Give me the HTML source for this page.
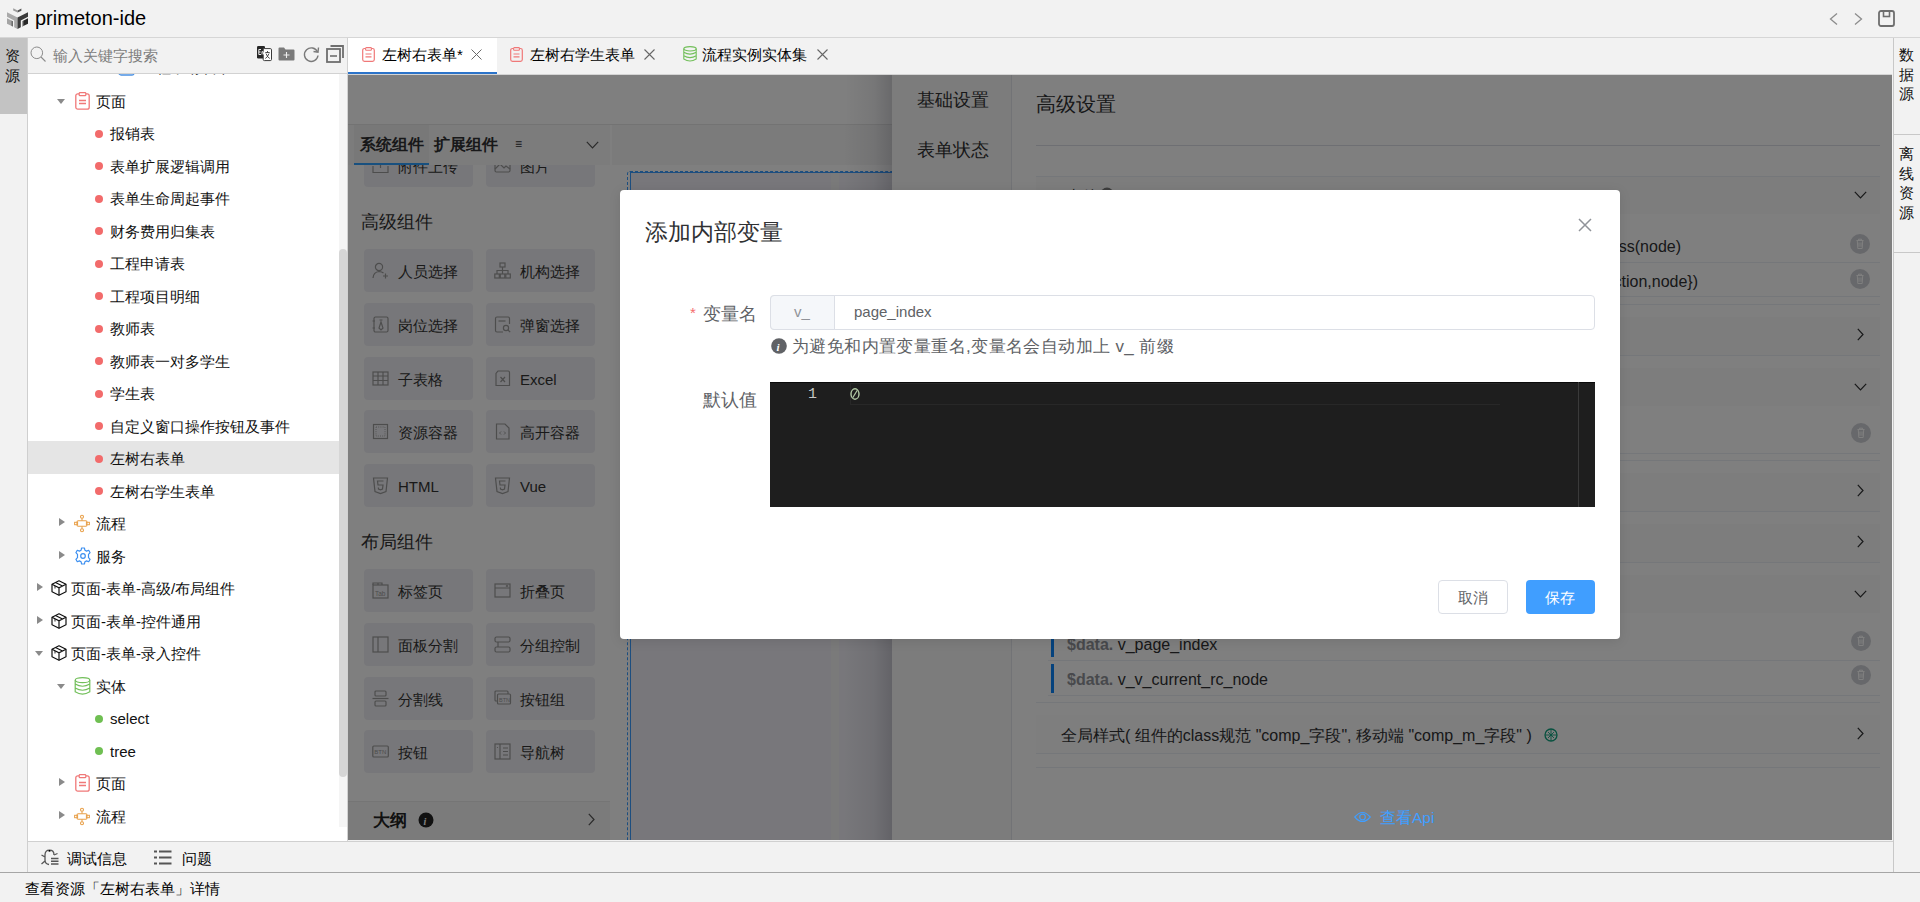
<!DOCTYPE html>
<html><head><meta charset="utf-8">
<style>
*{box-sizing:border-box;margin:0;padding:0}
html,body{width:1920px;height:902px;overflow:hidden;background:#f2f2f2;font-family:"Liberation Sans",sans-serif;color:#000;position:relative}
.a{position:absolute}
.hl{position:absolute;height:1px}
.vl{position:absolute;width:1px}
svg{position:absolute;overflow:visible}
.t15{font-size:15px;line-height:20px;white-space:nowrap}
/* tree */
.row{position:absolute;left:0;width:311px;height:32.5px}
.row .tx{position:absolute;top:6.75px;font-size:15px;line-height:20px;white-space:nowrap;color:#111}
.dot{position:absolute;width:8px;height:8px;border-radius:50%;top:12.5px;left:67px}
.tri-d{position:absolute;width:0;height:0;border-left:4.5px solid transparent;border-right:4.5px solid transparent;border-top:5px solid #8a8a8a;top:14px}
.tri-r{position:absolute;width:0;height:0;border-top:4.5px solid transparent;border-bottom:4.5px solid transparent;border-left:6px solid #8a8a8a;top:11px}
/* palette */
.pi{position:absolute;width:109px;height:43px;background:#f0f0f5;border-radius:4px}
.pi .tx{position:absolute;left:34px;top:11px;font-size:15px;line-height:20px;color:#333;white-space:nowrap}
.pi svg{left:8px;top:13px}
</style></head><body>

<!-- ===== TITLE BAR ===== -->
<div class="a" style="left:0;top:0;width:1920px;height:37px;background:#f2f2f2"></div>
<svg style="left:7px;top:7px" width="21" height="22" viewBox="0 0 21 22">
  <path d="M0 5.25 L10.5 10.5 L10.5 22 L7.2 20.35 L7.2 13.45 L0 9.85 Z" fill="#a9a9a9"/>
  <path d="M0 11.3 L5.8 14.2 L5.8 19.6 L0 16.7 Z" fill="#a4a4a4"/>
  <path d="M4.6 13.6 L5.8 14.2 L5.8 19.6 L4.6 19 Z" fill="#5a5a5a"/>
  <path d="M21 5.25 L10.5 10.5 L10.5 22 L13.8 20.35 L13.8 13.45 L21 9.85 Z" fill="#3a3a3a"/>
  <path d="M15.2 14.2 L21 11.3 L21 16.7 L15.2 19.6 Z" fill="#262626"/>
  <path d="M15.2 14.2 L16.3 13.65 L16.3 19.05 L15.2 19.6 Z" fill="#b0b0b0"/>
  <path d="M6.2 1.2 L10.6 3.4 L10.6 5.6 L6.2 3.4 Z" fill="#9c9c9c"/>
  <path d="M10.6 3.4 L14.4 1.5 L14.4 3.7 L10.6 5.6 Z" fill="#555"/>
</svg>
<div class="a" style="left:35px;top:6px;font-size:20px;line-height:24px;color:#000">primeton-ide</div>
<!-- window controls -->
<svg style="left:1829px;top:13px" width="9" height="12"><path d="M8 0.5 L1.5 6 L8 11.5" stroke="#8c8c8c" stroke-width="1.3" fill="none"/></svg>
<svg style="left:1854px;top:13px" width="9" height="12"><path d="M1 0.5 L7.5 6 L1 11.5" stroke="#8c8c8c" stroke-width="1.3" fill="none"/></svg>
<svg style="left:1878px;top:10px" width="17" height="17"><rect x="1" y="1" width="15" height="15" rx="2" stroke="#6e6e6e" stroke-width="1.8" fill="none"/><rect x="5.5" y="1" width="6" height="5.5" stroke="#6e6e6e" stroke-width="1.6" fill="none"/></svg>
<div class="hl" style="left:0;top:37px;width:1920px;background:#d6d6d6"></div>

<!-- ===== LEFT STRIP ===== -->
<div class="a" style="left:0;top:38px;width:27px;height:76px;background:#c3c3c3"></div>
<div class="a" style="left:3px;top:45.5px;font-size:15px;line-height:20.5px;color:#111;width:18px;text-align:center">资<br>源</div>
<div class="vl" style="left:27px;top:38px;height:834px;background:#cfcfcf"></div>

<!-- ===== LEFT PANEL ===== -->
<div class="a" style="left:28px;top:38px;width:319px;height:35px;background:#f2f2f2"></div>
<div class="hl" style="left:28px;top:73px;width:319px;background:#d2d2d2"></div>
<svg style="left:30px;top:46px" width="17" height="17"><circle cx="6.8" cy="6.8" r="5.8" stroke="#8c8c8c" stroke-width="1.0" fill="none"/><path d="M11 11 L15.5 15.5" stroke="#8c8c8c" stroke-width="1.1"/></svg>
<div class="a t15" style="left:53px;top:46px;color:#7d7d7d">输入关键字搜索</div>
<!-- toolbar icons -->
<svg style="left:257px;top:46px" width="15" height="15" viewBox="0 0 15 15"><rect x="0" y="0" width="8" height="12.5" rx="1.3" fill="#262626"/><rect x="6.2" y="2.6" width="8.3" height="12" rx="1.2" fill="#fff" stroke="#3a3a3a" stroke-width="1"/><path d="M1.8 3.5 V8.5 M1.8 3.5 H4 M1.8 6 H3.6 M1.8 8.5 H4 M5 5.5 V8.5 M5 6 Q6.5 5 6.5 6.5 V8.5" stroke="#fff" stroke-width="0.9" fill="none"/><path d="M8.3 6.5 H12.7 M10.5 5 V6.5 M9 7.5 Q10.5 11.5 12.8 12.5 M12 7.5 Q10.5 11.5 8.3 12.5" stroke="#333" stroke-width="0.85" fill="none"/></svg>
<svg style="left:278px;top:47px" width="17" height="14"><path d="M0.5 1.5 Q0.5 0.5 1.5 0.5 L6 0.5 L7.5 2.5 L15.5 2.5 Q16.5 2.5 16.5 3.5 L16.5 12.5 Q16.5 13.5 15.5 13.5 L1.5 13.5 Q0.5 13.5 0.5 12.5 Z" fill="#7a7a7a"/><path d="M8.5 5 L8.5 11 M5.5 8 L11.5 8" stroke="#eee" stroke-width="1.1"/></svg>
<svg style="left:303px;top:46px" width="17" height="17"><path d="M14.5 6 A6.8 6.8 0 1 0 15 9.5" stroke="#7a7a7a" stroke-width="1.4" fill="none"/><path d="M15.5 1.5 L15 6.2 L10.5 5.5" stroke="#7a7a7a" stroke-width="1.4" fill="none"/></svg>
<svg style="left:326px;top:45px" width="18" height="18"><rect x="1" y="4" width="13" height="13" stroke="#6e6e6e" stroke-width="1.8" fill="none"/><path d="M4.5 1 L17 1 L17 13" stroke="#6e6e6e" stroke-width="1.8" fill="none"/><path d="M4 11 L11 11" stroke="#6e6e6e" stroke-width="1.6"/></svg>

<div class="vl" style="left:347px;top:38px;height:803px;background:#d2d2d2"></div>
<!-- tree area -->
<div class="a" style="left:28px;top:74px;width:319px;height:767px;background:#fff;overflow:hidden" id="tree">
<div class="row" style="top:-21.75px"><svg style="left:90px;top:6px" width="17" height="18"><rect x="1" y="1" width="15" height="16" rx="2" stroke="#4a90e2" stroke-width="1.3" fill="none"/></svg><div class="tx" style="left:113px;top:5.5px">工程申请表单</div></div>
<div class="row" style="top:10.75px"><div class="tri-d" style="left:29px"></div><svg style="left:47px;top:7px" width="15" height="18" viewBox="0 0 15 18"><rect x="0.8" y="1.8" width="13.4" height="15.4" rx="2" stroke="#f07878" stroke-width="1.3" fill="none"/><rect x="4.2" y="0.7" width="6.6" height="3" rx="0.8" stroke="#f07878" stroke-width="1.2" fill="#fff"/><path d="M4 8.5 H11 M4 11.5 H11" stroke="#f07878" stroke-width="1.3"/></svg><div class="tx" style="left:68px">页面</div></div>
<div class="row" style="top:43.25px"><div class="dot" style="background:#f26b6b"></div><div class="tx" style="left:82px">报销表</div></div>
<div class="row" style="top:75.75px"><div class="dot" style="background:#f26b6b"></div><div class="tx" style="left:82px">表单扩展逻辑调用</div></div>
<div class="row" style="top:108.25px"><div class="dot" style="background:#f26b6b"></div><div class="tx" style="left:82px">表单生命周起事件</div></div>
<div class="row" style="top:140.75px"><div class="dot" style="background:#f26b6b"></div><div class="tx" style="left:82px">财务费用归集表</div></div>
<div class="row" style="top:173.25px"><div class="dot" style="background:#f26b6b"></div><div class="tx" style="left:82px">工程申请表</div></div>
<div class="row" style="top:205.75px"><div class="dot" style="background:#f26b6b"></div><div class="tx" style="left:82px">工程项目明细</div></div>
<div class="row" style="top:238.25px"><div class="dot" style="background:#f26b6b"></div><div class="tx" style="left:82px">教师表</div></div>
<div class="row" style="top:270.75px"><div class="dot" style="background:#f26b6b"></div><div class="tx" style="left:82px">教师表一对多学生</div></div>
<div class="row" style="top:303.25px"><div class="dot" style="background:#f26b6b"></div><div class="tx" style="left:82px">学生表</div></div>
<div class="row" style="top:335.75px"><div class="dot" style="background:#f26b6b"></div><div class="tx" style="left:82px">自定义窗口操作按钮及事件</div></div>
<div class="row" style="top:368.25px"><div style="position:absolute;left:0;top:-1px;width:311px;height:32.5px;background:#e5e5e5"></div><div class="dot" style="background:#f26b6b"></div><div class="tx" style="left:82px">左树右表单</div></div>
<div class="row" style="top:400.75px"><div class="dot" style="background:#f26b6b"></div><div class="tx" style="left:82px">左树右学生表单</div></div>
<div class="row" style="top:433.25px"><div class="tri-r" style="left:31px"></div><svg style="left:46px;top:8px" width="16" height="17" viewBox="0 0 16 17"><circle cx="8" cy="1.8" r="1.5" stroke="#e8a04a" stroke-width="1.1" fill="none"/><circle cx="8" cy="15.2" r="1.5" stroke="#e8a04a" stroke-width="1.1" fill="none"/><path d="M8 3.3 V5.8 M8 11.2 V13.7" stroke="#e8a04a" stroke-width="1.1"/><rect x="3" y="5.8" width="10" height="5.4" rx="1.2" stroke="#e8a04a" stroke-width="1.1" fill="none"/><rect x="0.6" y="7.3" width="3" height="2.4" stroke="#e8a04a" stroke-width="1" fill="none"/><rect x="12.4" y="7.3" width="3" height="2.4" stroke="#e8a04a" stroke-width="1" fill="none"/></svg><div class="tx" style="left:68px">流程</div></div>
<div class="row" style="top:465.75px"><div class="tri-r" style="left:31px"></div><svg style="left:46px;top:7px" width="18" height="18" viewBox="0 0 18 18"><path d="M7.6 1 H10.4 L10.9 3.2 L12.6 4.1 L14.7 3.3 L16.1 5.7 L14.5 7.3 V10.7 L16.1 12.3 L14.7 14.7 L12.6 13.9 L10.9 14.8 L10.4 17 H7.6 L7.1 14.8 L5.4 13.9 L3.3 14.7 L1.9 12.3 L3.5 10.7 V7.3 L1.9 5.7 L3.3 3.3 L5.4 4.1 L7.1 3.2 Z" stroke="#3c8ff0" stroke-width="1.2" fill="none" stroke-linejoin="round"/><circle cx="9" cy="9" r="2.3" stroke="#3c8ff0" stroke-width="1.2" fill="none"/></svg><div class="tx" style="left:68px">服务</div></div>
<div class="row" style="top:498.25px"><div class="tri-r" style="left:9px"></div><svg style="left:23px;top:8px" width="16" height="16" viewBox="0 0 16 16"><path d="M8 0.8 L15 4.3 V11.8 L8 15.2 L1 11.8 V4.3 Z" stroke="#111" stroke-width="1.2" fill="none" stroke-linejoin="round"/><path d="M1 4.3 L8 7.8 L15 4.3 M8 7.8 V15.2 M4.5 2.5 L11.5 6" stroke="#111" stroke-width="1.2" fill="none"/><path d="M4 6 V8.5" stroke="#111" stroke-width="0.9"/></svg><div class="tx" style="left:43px">页面-表单-高级/布局组件</div></div>
<div class="row" style="top:530.75px"><div class="tri-r" style="left:9px"></div><svg style="left:23px;top:8px" width="16" height="16" viewBox="0 0 16 16"><path d="M8 0.8 L15 4.3 V11.8 L8 15.2 L1 11.8 V4.3 Z" stroke="#111" stroke-width="1.2" fill="none" stroke-linejoin="round"/><path d="M1 4.3 L8 7.8 L15 4.3 M8 7.8 V15.2 M4.5 2.5 L11.5 6" stroke="#111" stroke-width="1.2" fill="none"/><path d="M4 6 V8.5" stroke="#111" stroke-width="0.9"/></svg><div class="tx" style="left:43px">页面-表单-控件通用</div></div>
<div class="row" style="top:563.25px"><div class="tri-d" style="left:7px"></div><svg style="left:23px;top:8px" width="16" height="16" viewBox="0 0 16 16"><path d="M8 0.8 L15 4.3 V11.8 L8 15.2 L1 11.8 V4.3 Z" stroke="#111" stroke-width="1.2" fill="none" stroke-linejoin="round"/><path d="M1 4.3 L8 7.8 L15 4.3 M8 7.8 V15.2 M4.5 2.5 L11.5 6" stroke="#111" stroke-width="1.2" fill="none"/><path d="M4 6 V8.5" stroke="#111" stroke-width="0.9"/></svg><div class="tx" style="left:43px">页面-表单-录入控件</div></div>
<div class="row" style="top:595.75px"><div class="tri-d" style="left:29px"></div><svg style="left:46px;top:7px" width="17" height="18" viewBox="0 0 17 18"><ellipse cx="8.5" cy="3.2" rx="7.3" ry="2.5" stroke="#72bf5a" stroke-width="1.2" fill="none"/><path d="M1.2 3.2 V14.8 Q8.5 19.5 15.8 14.8 V3.2 M1.2 7 Q8.5 11.5 15.8 7 M1.2 11 Q8.5 15.5 15.8 11" stroke="#72bf5a" stroke-width="1.2" fill="none"/></svg><div class="tx" style="left:68px">实体</div></div>
<div class="row" style="top:628.25px"><div class="dot" style="background:#6fbf52"></div><div class="tx" style="left:82px">select</div></div>
<div class="row" style="top:660.75px"><div class="dot" style="background:#6fbf52"></div><div class="tx" style="left:82px">tree</div></div>
<div class="row" style="top:693.25px"><div class="tri-r" style="left:31px"></div><svg style="left:47px;top:7px" width="15" height="18" viewBox="0 0 15 18"><rect x="0.8" y="1.8" width="13.4" height="15.4" rx="2" stroke="#f07878" stroke-width="1.3" fill="none"/><rect x="4.2" y="0.7" width="6.6" height="3" rx="0.8" stroke="#f07878" stroke-width="1.2" fill="#fff"/><path d="M4 8.5 H11 M4 11.5 H11" stroke="#f07878" stroke-width="1.3"/></svg><div class="tx" style="left:68px">页面</div></div>
<div class="row" style="top:725.75px"><div class="tri-r" style="left:31px"></div><svg style="left:46px;top:8px" width="16" height="17" viewBox="0 0 16 17"><circle cx="8" cy="1.8" r="1.5" stroke="#e8a04a" stroke-width="1.1" fill="none"/><circle cx="8" cy="15.2" r="1.5" stroke="#e8a04a" stroke-width="1.1" fill="none"/><path d="M8 3.3 V5.8 M8 11.2 V13.7" stroke="#e8a04a" stroke-width="1.1"/><rect x="3" y="5.8" width="10" height="5.4" rx="1.2" stroke="#e8a04a" stroke-width="1.1" fill="none"/><rect x="0.6" y="7.3" width="3" height="2.4" stroke="#e8a04a" stroke-width="1" fill="none"/><rect x="12.4" y="7.3" width="3" height="2.4" stroke="#e8a04a" stroke-width="1" fill="none"/></svg><div class="tx" style="left:68px">流程</div></div>
</div>
<!-- scrollbar -->
<div class="a" style="left:339px;top:74px;width:8px;height:753px;background:#f5f5f5"></div>
<div class="a" style="left:339px;top:249px;width:8px;height:528px;background:#d6d6d6;border-radius:4px"></div>

<!-- ===== TABS ===== -->
<div class="a" style="left:348px;top:38px;width:149px;height:36px;background:#fff"></div>
<div class="a" style="left:348px;top:72px;width:149px;height:2px;background:#2b73c9"></div>
<svg style="left:362px;top:47px" width="13" height="15" viewBox="0 0 13 15"><rect x="0.7" y="1.5" width="11.6" height="12.8" rx="1.8" stroke="#f07878" stroke-width="1.2" fill="none"/><rect x="3.6" y="0.6" width="5.8" height="2.6" rx="0.7" stroke="#f07878" stroke-width="1.1" fill="#fff"/><path d="M3.5 7 H9.5 M3.5 9.8 H9.5" stroke="#f07878" stroke-width="1.2"/></svg>
<div class="a t15" style="left:382px;top:45px;color:#000">左树右表单*</div>
<svg style="left:471px;top:49px" width="11" height="11"><path d="M0.5 0.5 L10.5 10.5 M10.5 0.5 L0.5 10.5" stroke="#6a6a6a" stroke-width="1"/></svg>
<svg style="left:510px;top:47px" width="13" height="15" viewBox="0 0 13 15"><rect x="0.7" y="1.5" width="11.6" height="12.8" rx="1.8" stroke="#f07878" stroke-width="1.2" fill="none"/><rect x="3.6" y="0.6" width="5.8" height="2.6" rx="0.7" stroke="#f07878" stroke-width="1.1" fill="#f2f2f2"/><path d="M3.5 7 H9.5 M3.5 9.8 H9.5" stroke="#f07878" stroke-width="1.2"/></svg>
<div class="a t15" style="left:530px;top:45px;color:#000">左树右学生表单</div>
<svg style="left:644px;top:49px" width="11" height="11"><path d="M0.5 0.5 L10.5 10.5 M10.5 0.5 L0.5 10.5" stroke="#666" stroke-width="1.1"/></svg>
<svg style="left:683px;top:46px" width="14" height="16" viewBox="0 0 14 16"><ellipse cx="7" cy="2.8" rx="6.2" ry="2.2" stroke="#72bf5a" stroke-width="1.1" fill="none"/><path d="M0.8 2.8 V13 Q7 17 13.2 13 V2.8 M0.8 6.3 Q7 10 13.2 6.3 M0.8 9.8 Q7 13.5 13.2 9.8" stroke="#72bf5a" stroke-width="1.1" fill="none"/></svg>
<div class="a t15" style="left:702px;top:45px;color:#000">流程实例实体集</div>
<svg style="left:817px;top:49px" width="11" height="11"><path d="M0.5 0.5 L10.5 10.5 M10.5 0.5 L0.5 10.5" stroke="#666" stroke-width="1.1"/></svg>


<!-- ===== EDITOR (under mask) ===== -->
<div class="a" style="left:348px;top:74px;width:1544px;height:766px;background:#fff;overflow:hidden" id="editor">
<!--EDITOR-START-->
<div class="a" style="left:0px;top:0px;width:1544px;height:50px;background:#fff"></div>
<div class="a" style="left:0px;top:50px;width:544px;height:1px;background:#e6e6e6"></div>
<div class="a" style="left:0px;top:51px;width:262px;height:715px;background:#fff"></div>
<div class="a" style="left:263px;top:51px;width:1px;height:715px;background:#dcdcdc"></div>
<div class="a" style="left:263px;top:51px;width:281px;height:715px;background:#fff"></div>
<div class="a" style="left:264px;top:51px;width:280px;height:40px;background:#f6f6f6"></div>
<div class="a" style="left:279px;top:97px;width:265px;height:669px;border-left:1px dashed #3a9cff;border-top:1px dashed #3a9cff;border-top-left-radius:3px"></div>
<div class="a" style="left:282px;top:98px;width:262px;height:1px;background:#3a9cff"></div>
<div class="a" style="left:282px;top:99px;width:262px;height:667px;background:#f0eff6;border-left:1.5px solid #3a9cff"></div>
<div class="a" style="left:483px;top:99px;width:8px;height:667px;background:#f5f5f5"></div>
<div class="a" style="left:16px;top:70px;width:109px;height:43px;background:#efeff4;border-radius:4px"></div>
<div class="a" style="left:50px;top:82.5px;white-space:nowrap;font-size:15px;line-height:20px;color:#333">附件上传</div>
<svg style="left:24px;top:83px" width="17" height="17" viewBox="0 0 17 17"><path d="M1 9 V15.5 H16 V9" stroke="#9a9a9a" stroke-width="1.2" fill="none"/><path d="M8.5 1.5 V11 M5 5 L8.5 1.5 L12 5" stroke="#9a9a9a" stroke-width="1.2" fill="none"/></svg>
<div class="a" style="left:138px;top:70px;width:109px;height:43px;background:#efeff4;border-radius:4px"></div>
<div class="a" style="left:172px;top:82.5px;white-space:nowrap;font-size:15px;line-height:20px;color:#333">图片</div>
<svg style="left:146px;top:83px" width="17" height="17" viewBox="0 0 17 17"><rect x="1" y="2" width="15" height="13" rx="1.5" stroke="#9a9a9a" stroke-width="1.2" fill="none"/><path d="M1 12 L6 7 L10 11 L12 9 L16 12" stroke="#9a9a9a" stroke-width="1.2" fill="none"/></svg>
<div class="a" style="left:13px;top:137px;white-space:nowrap;font-size:18px;line-height:22px;color:#333">高级组件</div>
<div class="a" style="left:16px;top:175px;width:109px;height:43px;background:#efeff4;border-radius:4px"></div>
<div class="a" style="left:50px;top:187.5px;white-space:nowrap;font-size:15px;line-height:20px;color:#333">人员选择</div>
<svg style="left:24px;top:188px" width="17" height="17" viewBox="0 0 17 17"><circle cx="7" cy="5" r="3.6" stroke="#9a9a9a" stroke-width="1.2" fill="none"/><path d="M1 16 Q1.5 10 7 9.5 Q10 9.6 11.5 11" stroke="#9a9a9a" stroke-width="1.2" fill="none"/><path d="M13.5 11.5 V16.5 M11 14 H16" stroke="#9a9a9a" stroke-width="1.2" fill="none"/></svg>
<div class="a" style="left:138px;top:175px;width:109px;height:43px;background:#efeff4;border-radius:4px"></div>
<div class="a" style="left:172px;top:187.5px;white-space:nowrap;font-size:15px;line-height:20px;color:#333">机构选择</div>
<svg style="left:146px;top:188px" width="17" height="17" viewBox="0 0 17 17"><rect x="6" y="1" width="5" height="4" stroke="#9a9a9a" stroke-width="1.2" fill="none"/><rect x="0.8" y="12" width="4.5" height="4" stroke="#9a9a9a" stroke-width="1.2" fill="none"/><rect x="6.3" y="12" width="4.5" height="4" stroke="#9a9a9a" stroke-width="1.2" fill="none"/><rect x="11.8" y="12" width="4.5" height="4" stroke="#9a9a9a" stroke-width="1.2" fill="none"/><path d="M8.5 5 V12 M3 12 V8.5 H14 V12" stroke="#9a9a9a" stroke-width="1.2" fill="none"/></svg>
<div class="a" style="left:16px;top:229px;width:109px;height:43px;background:#efeff4;border-radius:4px"></div>
<div class="a" style="left:50px;top:241.5px;white-space:nowrap;font-size:15px;line-height:20px;color:#333">岗位选择</div>
<svg style="left:24px;top:242px" width="17" height="17" viewBox="0 0 17 17"><rect x="2" y="1" width="14" height="15" rx="1.5" stroke="#9a9a9a" stroke-width="1.2" fill="none"/><path d="M0.5 5 H3 M0.5 12 H3 M7.5 4 H10.5 M9 6 L7 12 L9 14 L11 12 Z" stroke="#9a9a9a" stroke-width="1.2" fill="none"/></svg>
<div class="a" style="left:138px;top:229px;width:109px;height:43px;background:#efeff4;border-radius:4px"></div>
<div class="a" style="left:172px;top:241.5px;white-space:nowrap;font-size:15px;line-height:20px;color:#333">弹窗选择</div>
<svg style="left:146px;top:242px" width="17" height="17" viewBox="0 0 17 17"><path d="M9 16 H3 Q1.5 16 1.5 14.5 V2.5 Q1.5 1 3 1 H14 Q15.5 1 15.5 2.5 V8" stroke="#9a9a9a" stroke-width="1.2" fill="none"/><path d="M4.5 5 H11.5" stroke="#9a9a9a" stroke-width="1.2" fill="none"/><circle cx="12" cy="12" r="2.6" stroke="#9a9a9a" stroke-width="1.2" fill="none"/><path d="M14 14 L16.2 16.2" stroke="#9a9a9a" stroke-width="1.2" fill="none"/></svg>
<div class="a" style="left:16px;top:283px;width:109px;height:43px;background:#efeff4;border-radius:4px"></div>
<div class="a" style="left:50px;top:295.5px;white-space:nowrap;font-size:15px;line-height:20px;color:#333">子表格</div>
<svg style="left:24px;top:296px" width="17" height="17" viewBox="0 0 17 17"><rect x="1" y="2" width="15" height="13" stroke="#9a9a9a" stroke-width="1.2" fill="none"/><path d="M1 6 H16 M1 10.5 H16 M6 2 V15 M11 2 V15" stroke="#9a9a9a" stroke-width="1.2" fill="none"/></svg>
<div class="a" style="left:138px;top:283px;width:109px;height:43px;background:#efeff4;border-radius:4px"></div>
<div class="a" style="left:172px;top:295.5px;white-space:nowrap;font-size:15px;line-height:20px;color:#333">Excel</div>
<svg style="left:146px;top:296px" width="17" height="17" viewBox="0 0 17 17"><path d="M4 1 H14 Q15.5 1 15.5 2.5 V15.5 H2 V3.5 Z M2 3.5 L4 1" stroke="#9a9a9a" stroke-width="1.2" fill="none"/><path d="M6.5 7 L11 12 M11 7 L6.5 12" stroke="#9a9a9a" stroke-width="1.2" fill="none"/></svg>
<div class="a" style="left:16px;top:336px;width:109px;height:43px;background:#efeff4;border-radius:4px"></div>
<div class="a" style="left:50px;top:348.5px;white-space:nowrap;font-size:15px;line-height:20px;color:#333">资源容器</div>
<svg style="left:24px;top:349px" width="17" height="17" viewBox="0 0 17 17"><rect x="1.5" y="1.5" width="14" height="14" stroke="#9a9a9a" stroke-width="1.2" fill="none"/><path d="M4 4 H13 V13 H4 Z" stroke="#9a9a9a" stroke-width="0.8" stroke-dasharray="1 1.2" fill="none"/></svg>
<div class="a" style="left:138px;top:336px;width:109px;height:43px;background:#efeff4;border-radius:4px"></div>
<div class="a" style="left:172px;top:348.5px;white-space:nowrap;font-size:15px;line-height:20px;color:#333">高开容器</div>
<svg style="left:146px;top:349px" width="17" height="17" viewBox="0 0 17 17"><path d="M2.5 1 H11 L15 5 V16 H2.5 Z" stroke="#9a9a9a" stroke-width="1.2" fill="none"/><path d="M7 8.5 L5.5 10 L7 11.5 M10 8.5 L11.5 10 L10 11.5" stroke="#9a9a9a" stroke-width="0.9" fill="none"/></svg>
<div class="a" style="left:16px;top:390px;width:109px;height:43px;background:#efeff4;border-radius:4px"></div>
<div class="a" style="left:50px;top:402.5px;white-space:nowrap;font-size:15px;line-height:20px;color:#333">HTML</div>
<svg style="left:24px;top:403px" width="17" height="17" viewBox="0 0 17 17"><path d="M1.5 1 H15.5 L14 14.5 L8.5 16.5 L3 14.5 Z" stroke="#9a9a9a" stroke-width="1.2" fill="none"/><path d="M11.5 4 H5.5 L6 8 H11 L10.5 12 L8.5 12.8 L6.5 12 L6.3 10.5" stroke="#9a9a9a" stroke-width="1.2" fill="none"/></svg>
<div class="a" style="left:138px;top:390px;width:109px;height:43px;background:#efeff4;border-radius:4px"></div>
<div class="a" style="left:172px;top:402.5px;white-space:nowrap;font-size:15px;line-height:20px;color:#333">Vue</div>
<svg style="left:146px;top:403px" width="17" height="17" viewBox="0 0 17 17"><path d="M1.5 1 H15.5 L14 14.5 L8.5 16.5 L3 14.5 Z" stroke="#9a9a9a" stroke-width="1.2" fill="none"/><path d="M11.5 4 H5.5 L6 8 H11 L10.5 12 L8.5 12.8 L6.5 12 L6.3 10.5" stroke="#9a9a9a" stroke-width="1.2" fill="none"/></svg>
<div class="a" style="left:13px;top:457px;white-space:nowrap;font-size:18px;line-height:22px;color:#333">布局组件</div>
<div class="a" style="left:16px;top:495px;width:109px;height:43px;background:#efeff4;border-radius:4px"></div>
<div class="a" style="left:50px;top:507.5px;white-space:nowrap;font-size:15px;line-height:20px;color:#333">标签页</div>
<svg style="left:24px;top:508px" width="17" height="17" viewBox="0 0 17 17"><rect x="1" y="3" width="15" height="13" stroke="#9a9a9a" stroke-width="1.2" fill="none"/><path d="M1 3 V1 H6 V3 M6 1 H10 V3" stroke="#9a9a9a" stroke-width="1.2" fill="none"/><text x="3" y="13.5" font-size="6.5" fill="#9a9a9a" font-family="Liberation Sans">Tab</text></svg>
<div class="a" style="left:138px;top:495px;width:109px;height:43px;background:#efeff4;border-radius:4px"></div>
<div class="a" style="left:172px;top:507.5px;white-space:nowrap;font-size:15px;line-height:20px;color:#333">折叠页</div>
<svg style="left:146px;top:508px" width="17" height="17" viewBox="0 0 17 17"><rect x="1" y="2" width="15" height="13" stroke="#9a9a9a" stroke-width="1.2" fill="none"/><path d="M1 6 H16 M12 4.5 L13 3.5 L14 4.5" stroke="#9a9a9a" stroke-width="1.2" fill="none"/></svg>
<div class="a" style="left:16px;top:549px;width:109px;height:43px;background:#efeff4;border-radius:4px"></div>
<div class="a" style="left:50px;top:561.5px;white-space:nowrap;font-size:15px;line-height:20px;color:#333">面板分割</div>
<svg style="left:24px;top:562px" width="17" height="17" viewBox="0 0 17 17"><rect x="1" y="1" width="15" height="15" stroke="#9a9a9a" stroke-width="1.2" fill="none"/><path d="M6 1 V16" stroke="#9a9a9a" stroke-width="1.2" fill="none"/></svg>
<div class="a" style="left:138px;top:549px;width:109px;height:43px;background:#efeff4;border-radius:4px"></div>
<div class="a" style="left:172px;top:561.5px;white-space:nowrap;font-size:15px;line-height:20px;color:#333">分组控制</div>
<svg style="left:146px;top:562px" width="17" height="17" viewBox="0 0 17 17"><rect x="1" y="1" width="15" height="5" rx="1.5" stroke="#9a9a9a" stroke-width="1.2" fill="none"/><rect x="1" y="11" width="15" height="5" rx="1.5" stroke="#9a9a9a" stroke-width="1.2" fill="none"/><path d="M4 6 V11" stroke="#9a9a9a" stroke-width="1.2" fill="none"/></svg>
<div class="a" style="left:16px;top:603px;width:109px;height:43px;background:#efeff4;border-radius:4px"></div>
<div class="a" style="left:50px;top:615.5px;white-space:nowrap;font-size:15px;line-height:20px;color:#333">分割线</div>
<svg style="left:24px;top:616px" width="17" height="17" viewBox="0 0 17 17"><rect x="3" y="1" width="11" height="5" rx="1" stroke="#9a9a9a" stroke-width="1.2" fill="none"/><rect x="3" y="11" width="11" height="5" rx="1" stroke="#9a9a9a" stroke-width="1.2" fill="none"/><path d="M0.5 8.5 H16.5" stroke="#9a9a9a" stroke-width="1.2" fill="none"/></svg>
<div class="a" style="left:138px;top:603px;width:109px;height:43px;background:#efeff4;border-radius:4px"></div>
<div class="a" style="left:172px;top:615.5px;white-space:nowrap;font-size:15px;line-height:20px;color:#333">按钮组</div>
<svg style="left:146px;top:616px" width="17" height="17" viewBox="0 0 17 17"><rect x="1" y="1" width="13" height="10" rx="1" stroke="#9a9a9a" stroke-width="1.2" fill="none"/><rect x="3.5" y="4" width="13" height="10" rx="1" fill="#efeff4" stroke="#9a9a9a" stroke-width="1.2"/><text x="5" y="11.5" font-size="5.5" fill="#9a9a9a" font-family="Liberation Sans">BTN</text></svg>
<div class="a" style="left:16px;top:656px;width:109px;height:43px;background:#efeff4;border-radius:4px"></div>
<div class="a" style="left:50px;top:668.5px;white-space:nowrap;font-size:15px;line-height:20px;color:#333">按钮</div>
<svg style="left:24px;top:669px" width="17" height="17" viewBox="0 0 17 17"><rect x="0.8" y="3" width="15.5" height="11" rx="1" stroke="#9a9a9a" stroke-width="1.2" fill="none"/><text x="2.3" y="11.2" font-size="6" fill="#9a9a9a" font-family="Liberation Sans">BTN</text></svg>
<div class="a" style="left:138px;top:656px;width:109px;height:43px;background:#efeff4;border-radius:4px"></div>
<div class="a" style="left:172px;top:668.5px;white-space:nowrap;font-size:15px;line-height:20px;color:#333">导航树</div>
<svg style="left:146px;top:669px" width="17" height="17" viewBox="0 0 17 17"><rect x="1" y="1" width="15" height="15" stroke="#9a9a9a" stroke-width="1.2" fill="none"/><path d="M6 1 V16 M9 5 H14 M9 8.5 H14 M9 12 H14" stroke="#9a9a9a" stroke-width="1.2" fill="none"/><circle cx="3.5" cy="4.5" r="0.6" fill="#9a9a9a"/></svg>
<div class="a" style="left:0px;top:51px;width:262px;height:40px;background:#f9f9f9"></div>
<div class="a" style="left:6px;top:51px;width:75px;height:40px;background:#f0f0f0"></div>
<div class="a" style="left:6px;top:89px;width:75px;height:2px;background:#30a0ff"></div>
<div class="a" style="left:12px;top:61px;white-space:nowrap;font-size:16px;line-height:20px;font-weight:bold;color:#303133">系统组件</div>
<div class="a" style="left:86px;top:61px;white-space:nowrap;font-size:16px;line-height:20px;font-weight:bold;color:#303133">扩展组件</div>
<div class="a" style="left:167px;top:62px;white-space:nowrap;font-size:12px;line-height:16px;color:#303133">≡</div>
<svg style="left:238px;top:67px" width="13" height="8" viewBox="0 0 13 8"><path d="M0.8 0.8 L6.5 6.8 L12.2 0.8" stroke="#555" stroke-width="1.2" fill="none"/></svg>
<div class="a" style="left:0px;top:727px;width:262px;height:39px;background:#f6f6f6;border-top:1px solid #ebebeb"></div>
<div class="a" style="left:25px;top:737px;white-space:nowrap;font-size:17px;line-height:20px;font-weight:bold;color:#222">大纲</div>
<svg style="left:70px;top:738px" width="16" height="16" viewBox="0 0 16 16"><circle cx="8" cy="8" r="7.5" fill="#222"/><text x="5.6" y="12.5" font-size="10" font-style="italic" font-weight="bold" fill="#fff" font-family="Liberation Serif">i</text></svg>
<svg style="left:240px;top:739px" width="7" height="13" viewBox="0 0 7 13"><path d="M0.8 0.8 L6 6.5 L0.8 12.2" stroke="#555" stroke-width="1.2" fill="none"/></svg>
<div class="a" style="left:496px;top:0px;width:50px;height:766px;background:linear-gradient(to right,rgba(20,20,40,0),rgba(20,20,40,0.07) 60%,rgba(20,20,40,0.2))"></div>
<div class="a" style="left:544px;top:0px;width:1000px;height:766px;background:#fff"></div>
<div class="a" style="left:544px;top:0px;width:119px;height:766px;background:#f8f8f8"></div>
<div class="a" style="left:663px;top:0px;width:1px;height:766px;background:#e4e7ed"></div>
<div class="a" style="left:569px;top:15px;white-space:nowrap;font-size:18px;line-height:22px;color:#303133">基础设置</div>
<div class="a" style="left:569px;top:65px;white-space:nowrap;font-size:18px;line-height:22px;color:#303133">表单状态</div>
<div class="a" style="left:688px;top:18px;white-space:nowrap;font-size:20px;line-height:24px;color:#303133">高级设置</div>
<div class="a" style="left:688px;top:71px;width:844px;height:1px;background:#dcdfe6"></div>
<div class="a" style="left:688px;top:102px;width:844px;height:38px;background:#fafafa"></div>
<div class="a" style="left:688px;top:243px;width:844px;height:38px;background:#fafafa"></div>
<div class="a" style="left:688px;top:294px;width:844px;height:38px;background:#fafafa"></div>
<div class="a" style="left:688px;top:399px;width:844px;height:38px;background:#fafafa"></div>
<div class="a" style="left:688px;top:450px;width:844px;height:38px;background:#fafafa"></div>
<div class="a" style="left:688px;top:501px;width:844px;height:38px;background:#fafafa"></div>
<div class="a" style="left:688px;top:102px;width:844px;height:1px;background:#ebeef5"></div>
<div class="a" style="left:718px;top:113px;white-space:nowrap;font-size:16px;line-height:20px;color:#303133">事件 </div>
<svg style="left:752px;top:113px" width="14" height="14" viewBox="0 0 14 14"><circle cx="7" cy="7" r="6.5" fill="#7a7a7a"/></svg>
<svg style="left:1506px;top:117px" width="13" height="8" viewBox="0 0 13 8"><path d="M0.8 0.8 L6.5 6.8 L12.2 0.8" stroke="#303133" stroke-width="1.2" fill="none"/></svg>
<div class="a" style="left:752px;top:163px;width:581px;text-align:right;white-space:nowrap;font-size:16px;line-height:20px;color:#303133">onNodeClickClass(node)</div>
<svg style="left:1502px;top:160px" width="20" height="20" viewBox="0 0 20 20"><circle cx="10" cy="10" r="10" fill="#cfd1d6"/><path d="M6.5 6.5 H13.5 M8.5 6.5 V5.2 H11.5 V6.5 M7.3 6.5 L7.8 14.5 H12.2 L12.7 6.5 M9 8.5 V12.8 M11 8.5 V12.8" stroke="#fff" stroke-width="1" fill="none"/></svg>
<div class="a" style="left:700px;top:188px;width:832px;height:1px;background:#ebeef5"></div>
<div class="a" style="left:752px;top:198px;width:598px;text-align:right;white-space:nowrap;font-size:16px;line-height:20px;color:#303133">this.loadData({action,node})</div>
<svg style="left:1502px;top:195px" width="20" height="20" viewBox="0 0 20 20"><circle cx="10" cy="10" r="10" fill="#cfd1d6"/><path d="M6.5 6.5 H13.5 M8.5 6.5 V5.2 H11.5 V6.5 M7.3 6.5 L7.8 14.5 H12.2 L12.7 6.5 M9 8.5 V12.8 M11 8.5 V12.8" stroke="#fff" stroke-width="1" fill="none"/></svg>
<div class="a" style="left:700px;top:222px;width:832px;height:1px;background:#ebeef5"></div>
<div class="a" style="left:688px;top:230px;width:844px;height:1px;background:#ebeef5"></div>
<svg style="left:1509px;top:254px" width="7" height="13" viewBox="0 0 7 13"><path d="M0.8 0.8 L6 6.5 L0.8 12.2" stroke="#303133" stroke-width="1.2" fill="none"/></svg>
<div class="a" style="left:688px;top:281px;width:844px;height:1px;background:#ebeef5"></div>
<svg style="left:1506px;top:309px" width="13" height="8" viewBox="0 0 13 8"><path d="M0.8 0.8 L6.5 6.8 L12.2 0.8" stroke="#303133" stroke-width="1.2" fill="none"/></svg>
<svg style="left:1503px;top:349px" width="20" height="20" viewBox="0 0 20 20"><circle cx="10" cy="10" r="10" fill="#cfd1d6"/><path d="M6.5 6.5 H13.5 M8.5 6.5 V5.2 H11.5 V6.5 M7.3 6.5 L7.8 14.5 H12.2 L12.7 6.5 M9 8.5 V12.8 M11 8.5 V12.8" stroke="#fff" stroke-width="1" fill="none"/></svg>
<div class="a" style="left:700px;top:379px;width:832px;height:1px;background:#ebeef5"></div>
<div class="a" style="left:688px;top:386px;width:844px;height:1px;background:#ebeef5"></div>
<svg style="left:1509px;top:410px" width="7" height="13" viewBox="0 0 7 13"><path d="M0.8 0.8 L6 6.5 L0.8 12.2" stroke="#303133" stroke-width="1.2" fill="none"/></svg>
<div class="a" style="left:688px;top:437px;width:844px;height:1px;background:#ebeef5"></div>
<svg style="left:1509px;top:461px" width="7" height="13" viewBox="0 0 7 13"><path d="M0.8 0.8 L6 6.5 L0.8 12.2" stroke="#303133" stroke-width="1.2" fill="none"/></svg>
<div class="a" style="left:688px;top:488px;width:844px;height:1px;background:#ebeef5"></div>
<svg style="left:1506px;top:516px" width="13" height="8" viewBox="0 0 13 8"><path d="M0.8 0.8 L6.5 6.8 L12.2 0.8" stroke="#303133" stroke-width="1.2" fill="none"/></svg>
<svg style="left:1503px;top:557px" width="20" height="20" viewBox="0 0 20 20"><circle cx="10" cy="10" r="10" fill="#cfd1d6"/><path d="M6.5 6.5 H13.5 M8.5 6.5 V5.2 H11.5 V6.5 M7.3 6.5 L7.8 14.5 H12.2 L12.7 6.5 M9 8.5 V12.8 M11 8.5 V12.8" stroke="#fff" stroke-width="1" fill="none"/></svg>
<div class="a" style="left:703px;top:552px;width:3px;height:31px;background:#0a84fa"></div>
<div class="a" style="left:719px;top:561px;white-space:nowrap;font-size:16px;line-height:20px;color:#303133"><b style="color:#909399">$data.</b> v_page_index</div>
<div class="a" style="left:700px;top:586px;width:832px;height:1px;background:#ebeef5"></div>
<svg style="left:1503px;top:591px" width="20" height="20" viewBox="0 0 20 20"><circle cx="10" cy="10" r="10" fill="#cfd1d6"/><path d="M6.5 6.5 H13.5 M8.5 6.5 V5.2 H11.5 V6.5 M7.3 6.5 L7.8 14.5 H12.2 L12.7 6.5 M9 8.5 V12.8 M11 8.5 V12.8" stroke="#fff" stroke-width="1" fill="none"/></svg>
<div class="a" style="left:703px;top:590px;width:3px;height:29px;background:#0a84fa"></div>
<div class="a" style="left:719px;top:596px;white-space:nowrap;font-size:16px;line-height:20px;color:#303133"><b style="color:#909399">$data.</b> v_v_current_rc_node</div>
<div class="a" style="left:700px;top:621px;width:832px;height:1px;background:#ebeef5"></div>
<div class="a" style="left:688px;top:628px;width:844px;height:1px;background:#ebeef5"></div>
<div class="a" style="left:688px;top:641px;width:844px;height:38px;background:#fcfcfc"></div>
<div class="a" style="left:713px;top:652px;white-space:nowrap;font-size:16px;line-height:20px;color:#303133">全局样式( 组件的class规范 "comp_字段", 移动端 "comp_m_字段" )</div>
<svg style="left:1195px;top:653px" width="16" height="16" viewBox="0 0 16 16"><circle cx="8" cy="8" r="6" stroke="#10a37f" stroke-width="1.3" fill="none"/><path d="M5 5 L11 11 M11 5 L5 11 M8 2 V14 M2 8 H14" stroke="#10a37f" stroke-width="0.9"/></svg>
<svg style="left:1509px;top:653px" width="7" height="13" viewBox="0 0 7 13"><path d="M0.8 0.8 L6 6.5 L0.8 12.2" stroke="#303133" stroke-width="1.2" fill="none"/></svg>
<div class="a" style="left:688px;top:679px;width:844px;height:1px;background:#ebeef5"></div>
<div class="a" style="left:688px;top:693px;width:844px;height:1px;background:#ebeef5"></div>
<!--EDITOR-END-->
</div>

<div class="a" id="mask" style="left:348px;top:75px;width:1544px;height:765px;background:rgba(0,0,0,.5)"></div>
<div class="hl" style="left:348px;top:74px;width:1544px;background:#d4d4d4"></div>
<svg style="left:1354px;top:811px" width="17" height="12" viewBox="0 0 17 12"><path d="M0.8 6 Q8.5 -3 16.2 6 Q8.5 15 0.8 6 Z" stroke="#409eff" stroke-width="1.2" fill="none"/><circle cx="8.5" cy="6" r="2.8" stroke="#409eff" stroke-width="1.2" fill="none"/></svg>
<div class="a" style="left:1380px;top:808px;font-size:15.5px;line-height:20px;color:#409eff;white-space:nowrap">查看Api</div>
<!-- ===== RIGHT STRIP ===== -->
<div class="vl" style="left:1893px;top:38px;height:834px;background:#c8c8c8"></div>
<div class="a" style="left:1896px;top:45px;width:20px;font-size:15px;line-height:19.5px;color:#111;text-align:center">数<br>据<br>源</div>
<div class="hl" style="left:1894px;top:134px;width:26px;background:#c8c8c8"></div>
<div class="a" style="left:1896px;top:144px;width:20px;font-size:15px;line-height:19.5px;color:#111;text-align:center">离<br>线<br>资<br>源</div>
<div class="hl" style="left:1894px;top:252px;width:26px;background:#c8c8c8"></div>

<!-- ===== BOTTOM PANEL ===== -->
<div class="hl" style="left:28px;top:841px;width:1865px;background:#d0d0d0"></div>
<svg style="left:41px;top:849px" width="18" height="17" viewBox="0 0 18 17"><path d="M4 6 Q4 1.2 8.5 1.2 Q13 1.2 13 6" stroke="#555" stroke-width="1.3" fill="none"/><path d="M4 6 V11 Q4 15 8 15.5 M0.5 6 L4 8 M0.5 15 L4 12" stroke="#555" stroke-width="1.3" fill="none"/><path d="M7 1 L8.5 3 L10 1" stroke="#555" stroke-width="1"/><path d="M13 6 L16.5 4.5" stroke="#555" stroke-width="1.2"/><path d="M10 9.5 H17.5 M10 12.2 H17.5 M10 15 H17.5" stroke="#555" stroke-width="1.5"/></svg>
<div class="a t15" style="left:67px;top:848.5px;color:#000">调试信息</div>
<svg style="left:154px;top:850px" width="18" height="15" viewBox="0 0 18 15"><path d="M0 1.5 H3 M0 7.5 H3 M0 13.5 H3 M5 1.5 H17.5 M5 7.5 H17.5 M5 13.5 H17.5" stroke="#555" stroke-width="2"/></svg>
<div class="a t15" style="left:182px;top:848.5px;color:#000">问题</div>
<div class="hl" style="left:0;top:872px;width:1920px;background:#a6a6a6"></div>
<div class="a t15" style="left:25px;top:878.5px;color:#000">查看资源「左树右表单」详情</div>

<!-- ===== MODAL ===== -->
<div class="a" style="left:620px;top:190px;width:1000px;height:449px;background:#fff;border-radius:4px;box-shadow:0 2px 12px rgba(0,0,0,.1)" id="modal">
<div class="a" style="left:25px;top:29px;font-size:22.5px;line-height:28px;color:#303133;white-space:nowrap">添加内部变量</div>
<svg style="left:958px;top:28px" width="14" height="14"><path d="M1 1 L13 13 M13 1 L1 13" stroke="#909399" stroke-width="1.5"/></svg>
<div class="a" style="left:70px;top:114px;font-size:15px;line-height:18px;color:#f56c6c">*</div>
<div class="a" style="left:83px;top:113px;font-size:17.5px;line-height:22px;color:#606266;white-space:nowrap">变量名</div>
<div class="a" style="left:150px;top:105px;width:825px;height:35px;border:1px solid #dcdfe6;border-radius:4px;background:#fff"></div>
<div class="a" style="left:150px;top:105px;width:65px;height:35px;border:1px solid #dcdfe6;border-radius:4px 0 0 4px;background:#f5f7fa"></div>
<div class="a" style="left:174px;top:113px;font-size:15px;line-height:18px;color:#909399">v_</div>
<div class="a" style="left:234px;top:113px;font-size:15px;line-height:18px;color:#606266">page_index</div>
<svg style="left:151px;top:148px" width="16" height="16"><circle cx="8" cy="8" r="7.8" fill="#606266"/><text x="5.4" y="12.6" font-size="11" font-style="italic" font-weight="bold" fill="#fff" font-family="Liberation Serif">i</text></svg>
<div class="a" style="left:172px;top:145.5px;letter-spacing:0.4px;font-size:17px;line-height:22px;color:#606266;white-space:nowrap">为避免和内置变量重名,变量名会自动加上 v_ 前缀</div>
<div class="a" style="left:83px;top:199px;font-size:17.5px;line-height:22px;color:#606266;white-space:nowrap">默认值</div>
<div class="a" style="left:150px;top:192px;width:825px;height:125px;background:#1e1e1e;border-top:1px solid #0a0a0a"></div>
<div class="a" style="left:230px;top:193px;width:650px;height:22px;border:1px solid #282828;border-right:none"></div>
<div class="a" style="left:958px;top:192px;width:1px;height:125px;background:#3a3a3a"></div>
<div class="a" style="left:188px;top:196px;font-family:'Liberation Mono',monospace;font-size:15px;line-height:18px;color:#c6c6c6">1</div>
<svg style="left:230px;top:198px" width="10" height="12" viewBox="0 0 10 12"><ellipse cx="5" cy="6" rx="4" ry="5.2" stroke="#b5cea8" stroke-width="1.4" fill="none"/><path d="M7.3 2.2 L2.7 9.8" stroke="#b5cea8" stroke-width="1.2"/></svg>
<div class="a" style="left:818px;top:390px;width:70px;height:34px;border:1px solid #dcdfe6;border-radius:4px;background:#fff"></div>
<div class="a" style="left:838px;top:398px;font-size:15px;line-height:20px;color:#606266">取消</div>
<div class="a" style="left:906px;top:390px;width:69px;height:34px;border-radius:4px;background:#409eff"></div>
<div class="a" style="left:925px;top:398px;font-size:15px;line-height:20px;color:#fff">保存</div>
</div>

</body></html>
